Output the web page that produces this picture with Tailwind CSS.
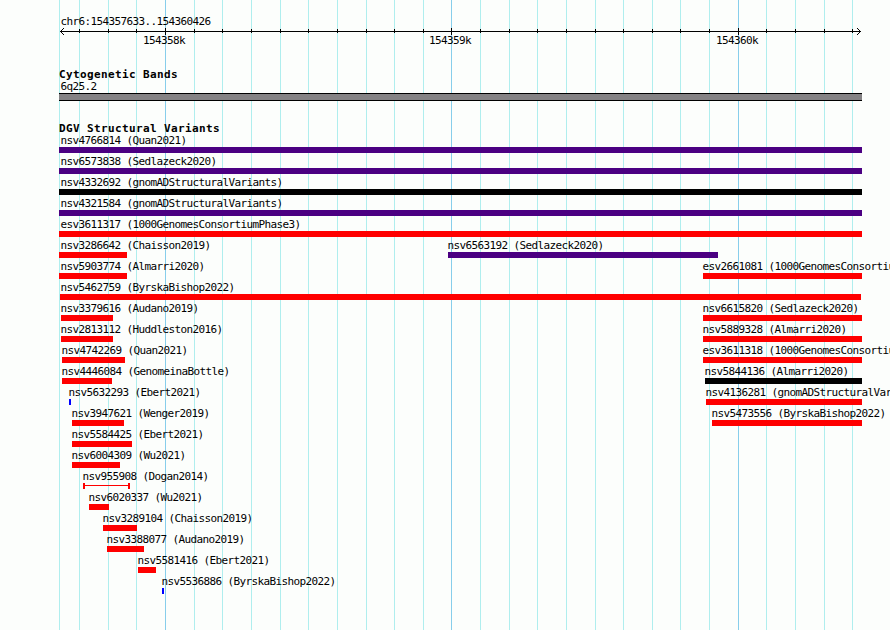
<!DOCTYPE html>
<html lang="en">
<head>
<meta charset="utf-8">
<title>chr6:154357633..154360426</title>
<script src="https://cdn.jsdelivr.net/npm/@tailwindcss/browser@4"></script>
</head>
<body class="bg-[#fcfefc]">
<main class="relative isolate h-[630px] w-[890px] overflow-hidden bg-[#fcfefc] font-['DejaVu_Sans_Mono',monospace] text-[11px] leading-[16px] tracking-[-0.622px] whitespace-nowrap text-black">
  <svg id="grid" class="absolute inset-0 -z-10" width="890" height="630" shape-rendering="crispEdges"></svg>

  <header class="pt-[14px]">
    <p class="ml-[60px] h-[14px] indent-[0.4px]">chr6:154357633..154360426</p>
    <svg id="ruler" class="block" width="890" height="7" shape-rendering="crispEdges"></svg>
    <div class="-mt-[2px] grid h-[14px]">
      <span class="[grid-area:1/1] ml-[143px]">154358k</span>
      <span class="[grid-area:1/1] ml-[429px]">154359k</span>
      <span class="[grid-area:1/1] ml-[716px]">154360k</span>
    </div>
  </header>

  <section class="pt-[20px]">
    <h2 class="ml-[59px] h-[12px] font-bold tracking-[0.378px]">Cytogenetic Bands</h2>
    <p class="ml-[60px] h-[14px] indent-[0.4px]">6q25.2</p>
    <div class="ml-[59px] h-[8px] w-[803px] border-y border-black bg-[#848284]"></div>
  </section>

  <section class="pt-[20px]">
    <h2 class="ml-[59px] h-[12px] font-bold tracking-[0.378px]">DGV Structural Variants</h2>
    <div id="rows" class="flex flex-col"></div>
  </section>
</main>
<script>
const ticks = [79,108,136,165,194,222,251,280,308,337,366,394,423,451,480,509,537,566,595,623,652,680,709,738,766,795,824,852];
const major = new Set([165,451,738]);
const rect = (x, y, w, h, f) => `<rect x="${x}" y="${y}" width="${w}" height="${h}" fill="${f}"/>`;
document.getElementById('grid').innerHTML =
  [59, ...ticks].map(x => rect(x, 0, 1, 630, major.has(x) ? '#87ceeb' : '#afeeee')).join('');
document.getElementById('ruler').innerHTML = rect(60, 3, 801, 1, '#000') +
  ticks.map(x => major.has(x) ? rect(x, 0, 1, 7, '#000') : rect(x, 1, 1, 4, '#000')).join('') +
  [1, 2, 3].map(i => rect(60 + i, 3 - i, 1, 1, '#000') + rect(60 + i, 3 + i, 1, 1, '#000') +
    rect(860 - i, 3 - i, 1, 1, '#000') + rect(860 - i, 3 + i, 1, 1, '#000')).join('');

const kinds = {
  p: 'h-[6px] bg-[#4b0082]',
  k: 'h-[6px] bg-black',
  r: 'h-[6px] bg-[#ff0000]',
  b: 'h-[6px] bg-[#0000ff]',
  s: 'h-[6px] border-x-2 border-[#ff0000] pt-[2px]'
};
const rows = [
  [['nsv4766814 (Quan2021)',59,862,'p']],
  [['nsv6573838 (Sedlazeck2020)',59,862,'p']],
  [['nsv4332692 (gnomADStructuralVariants)',59,862,'k']],
  [['nsv4321584 (gnomADStructuralVariants)',59,862,'p']],
  [['esv3611317 (1000GenomesConsortiumPhase3)',59,862,'r']],
  [['nsv3286642 (Chaisson2019)',59,127,'r'],['nsv6563192 (Sedlazeck2020)',448,718,'p']],
  [['nsv5903774 (Almarri2020)',59,127,'r'],['esv2661081 (1000GenomesConsortiumPhase1)',703,862,'r']],
  [['nsv5462759 (ByrskaBishop2022)',60,861,'r']],
  [['nsv3379616 (Audano2019)',61,113,'r'],['nsv6615820 (Sedlazeck2020)',703,862,'r']],
  [['nsv2813112 (Huddleston2016)',61,113,'r'],['nsv5889328 (Almarri2020)',703,862,'r']],
  [['nsv4742269 (Quan2021)',62,125,'r'],['esv3611318 (1000GenomesConsortiumPhase3)',703,862,'r']],
  [['nsv4446084 (GenomeinaBottle)',62,112,'r'],['nsv5844136 (Almarri2020)',705,862,'k']],
  [['nsv5632293 (Ebert2021)',69,71,'b'],['nsv4136281 (gnomADStructuralVariants)',706,862,'r']],
  [['nsv3947621 (Wenger2019)',72,124,'r'],['nsv5473556 (ByrskaBishop2022)',712,862,'r']],
  [['nsv5584425 (Ebert2021)',72,132,'r']],
  [['nsv6004309 (Wu2021)',72,120,'r']],
  [['nsv955908 (Dogan2014)',83,130,'s']],
  [['nsv6020337 (Wu2021)',89,109,'r']],
  [['nsv3289104 (Chaisson2019)',103,137,'r']],
  [['nsv3388077 (Audano2019)',107,144,'r']],
  [['nsv5581416 (Ebert2021)',138,156,'r']],
  [['nsv5536886 (ByrskaBishop2022)',162,164,'b']]
];
document.getElementById('rows').innerHTML = rows.map(r =>
  `<div class="grid h-[21px] grid-cols-[890px]">${r.map(([t, a, b, k]) =>
    `<div class="[grid-area:1/1]"><p class="h-[14px] indent-[0.4px]" style="margin-left:${Math.max(60, a - 1)}px">${t}</p>` +
    `<div class="${kinds[k]}" style="margin-left:${a}px;width:${b - a}px">${k === 's' ? '<div class="h-px bg-[#ff0000]"></div>' : ''}</div></div>`
  ).join('')}</div>`).join('');
</script>
</body>
</html>
